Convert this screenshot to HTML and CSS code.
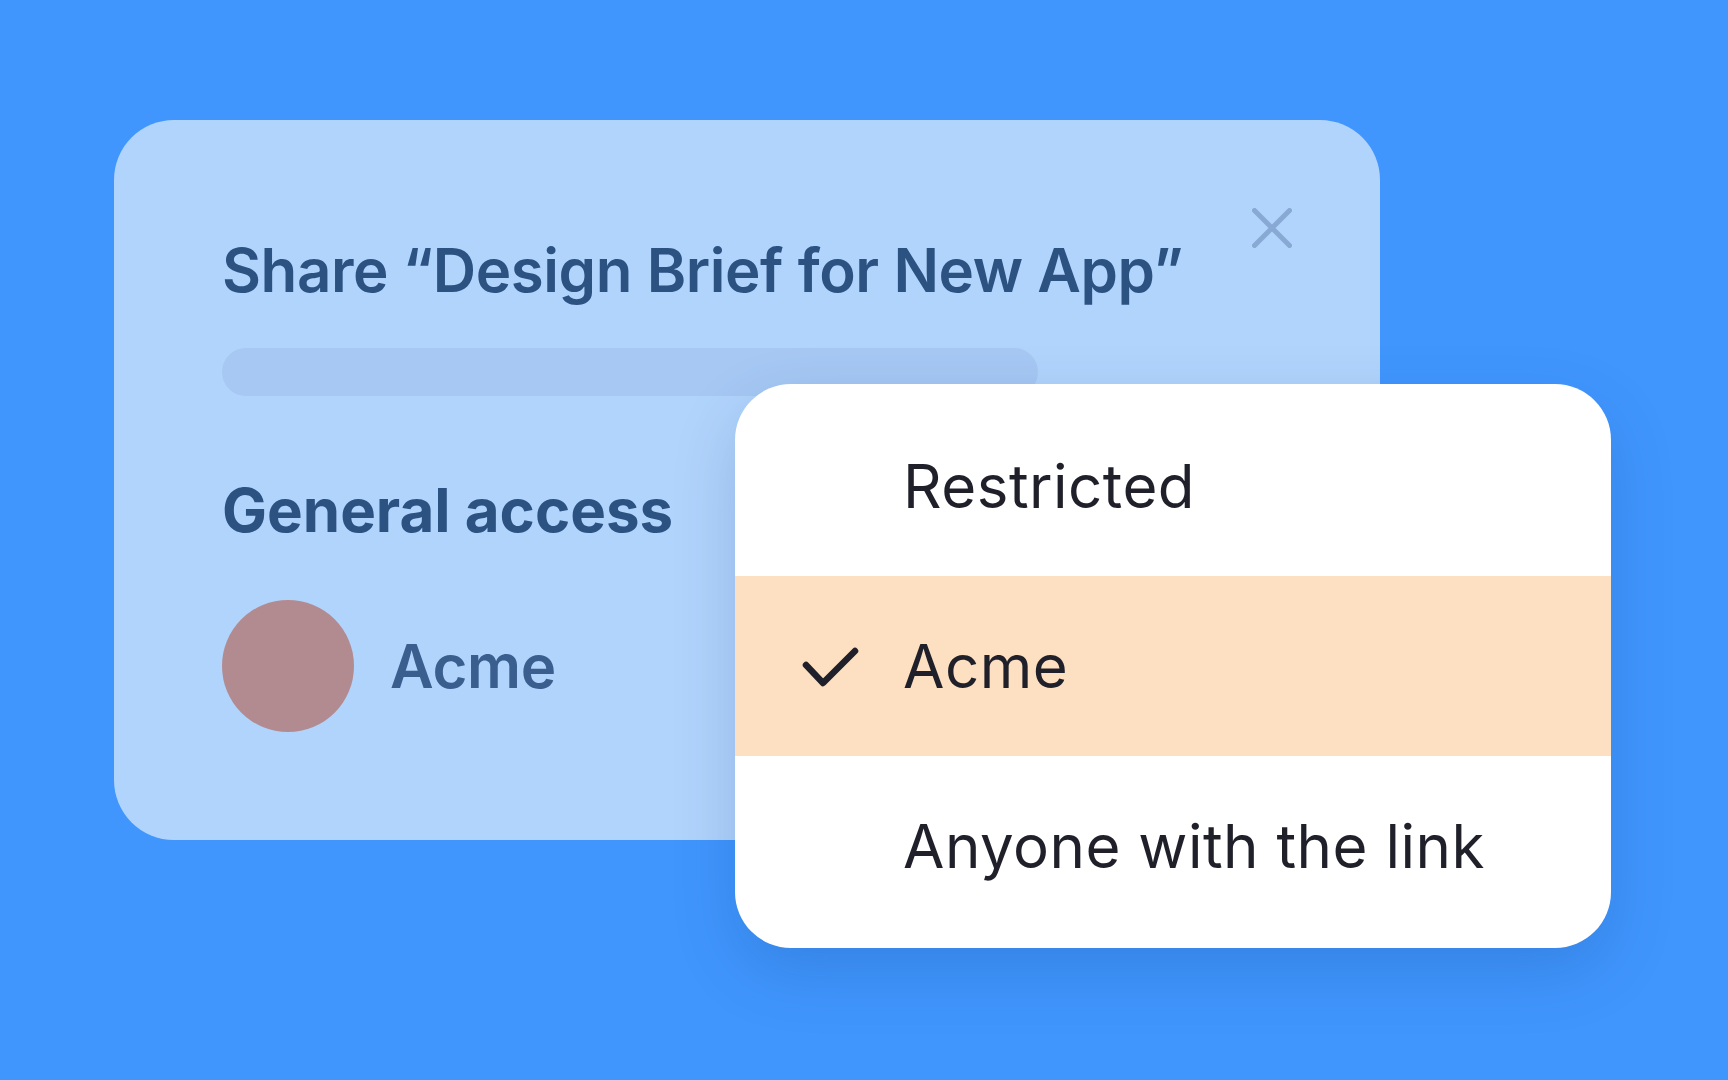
FILE: index.html
```html
<!DOCTYPE html>
<html lang="en">
<head>
<meta charset="utf-8">
<title>Share dialog</title>
<link rel="stylesheet" href="styles.css">
</head>
<body>
<main class="stage">
  <section class="card">
    <h1 class="title">Share “Design Brief for New App”</h1>
    <svg class="close" width="40" height="40" viewBox="0 0 40 40" aria-label="Close">
      <path d="M2.5 2.5 L37.5 37.5 M37.5 2.5 L2.5 37.5" />
    </svg>
    <div class="placeholder-bar"></div>
    <h2 class="section-title">General access</h2>
    <div class="org-row">
      <span class="avatar"></span>
      <span class="org-name">Acme</span>
    </div>
  </section>
  <ul class="menu">
    <li class="menu-item"><span class="check-slot"></span><span class="label">Restricted</span></li>
    <li class="menu-item selected">
      <span class="check-slot">
        <svg class="check" width="60" height="50" viewBox="0 0 60 50"><path d="M6 24 L23 42 L55 10" /></svg>
      </span>
      <span class="label">Acme</span>
    </li>
    <li class="menu-item"><span class="check-slot"></span><span class="label">Anyone with the link</span></li>
  </ul>
</main>
</body>
</html>
```

FILE: styles.css
```css
* { box-sizing: border-box; }

html, body {
  margin: 0;
  padding: 0;
}

body {
  width: 1728px;
  height: 1080px;
  background: #4096fd;
  font-family: Inter, "Noto Sans", "Liberation Sans", sans-serif;
  overflow: hidden;
}

.stage {
  position: relative;
  padding: 120px 0 0 114px;
}

.card {
  position: relative;
  width: 1266px;
  height: 720px;
  background: #b1d4fc;
  border-radius: 60px;
  padding: 114px 0 0 108px;
  display: flex;
  flex-direction: column;
  align-items: flex-start;
}

.title {
  margin: 0;
  font-size: 60px;
  line-height: 72px;
  font-weight: 600;
  letter-spacing: -0.42px;
  color: #2c5282;
  white-space: nowrap;
}

.close {
  position: absolute;
  top: 88px;
  right: 88px;
  fill: none;
  stroke: #87a9d4;
  stroke-width: 5;
  stroke-linecap: round;
}

.placeholder-bar {
  margin-top: 42px;
  width: 816px;
  height: 48px;
  border-radius: 24px;
  background: #a6c8f3;
}

.section-title {
  margin: 78px 0 0;
  font-size: 60px;
  line-height: 72px;
  font-weight: 700;
  color: #2c5282;
}

.org-row {
  margin-top: 54px;
  display: flex;
  align-items: center;
  gap: 36px;
}

.avatar {
  width: 132px;
  height: 132px;
  border-radius: 50%;
  background: #b28b90;
}

.org-name {
  font-size: 60px;
  line-height: 72px;
  font-weight: 600;
  letter-spacing: -0.3px;
  color: #3a5f8e;
}

.menu {
  position: absolute;
  left: 735px;
  top: 384px;
  width: 876px;
  height: 564px;
  margin: 0;
  padding: 12px 0;
  list-style: none;
  background: #ffffff;
  border-radius: 56px;
  box-shadow: 0 24px 64px rgba(10, 50, 120, 0.18);
  overflow: hidden;
}

.menu-item {
  height: 180px;
  display: flex;
  align-items: center;
}

.menu-item.selected {
  background: #fddfc2;
}

.check-slot {
  width: 168px;
  height: 50px;
  padding-left: 65px;
  display: flex;
  align-items: center;
}

.check {
  fill: none;
  stroke: #1f2029;
  stroke-width: 6.5;
  stroke-linecap: round;
  stroke-linejoin: round;
}

.label {
  font-size: 60px;
  line-height: 72px;
  font-weight: 400;
  letter-spacing: 0.5px;
  color: #1f2029;
  white-space: nowrap;
}
```
